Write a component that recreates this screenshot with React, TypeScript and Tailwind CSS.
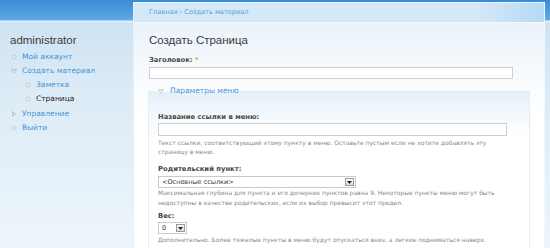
const MENU = [
  { label: 'Мой аккаунт', kind: 'leaf', depth: 0 },
  { label: 'Создать материал', kind: 'open', depth: 0 },
  { label: 'Заметка', kind: 'leaf', depth: 1 },
  { label: 'Страница', kind: 'leaf', depth: 1, active: true },
  { label: 'Управление', kind: 'closed', depth: 0 },
  { label: 'Выйти', kind: 'leaf', depth: 0 },
] as const

const Bullet = ({ kind }: { kind: 'leaf' | 'open' | 'closed' }) => {
  if (kind === 'open') {
    return (
      <svg width="6" height="6" viewBox="0 0 6 6" className="shrink-0">
        <path d="M0.5 1.5 L5.5 1.5 L3 5 Z" fill="#e4e4e4" stroke="#b8b8b8" strokeWidth="0.8" />
      </svg>
    )
  }
  if (kind === 'closed') {
    return (
      <svg width="6" height="6" viewBox="0 0 6 6" className="shrink-0">
        <path d="M1.5 0.5 L5 3 L1.5 5.5 Z" fill="#e4e4e4" stroke="#b8b8b8" strokeWidth="0.8" />
      </svg>
    )
  }
  return (
    <svg width="6" height="6" viewBox="0 0 6 6" className="shrink-0">
      <circle cx="3" cy="3" r="2" fill="#ececec" stroke="#c4c4c4" strokeWidth="0.8" />
    </svg>
  )
}

const SelectBox = ({ value, width }: { value: string; width: string }) => (
  <div className={`${width} h-[12px] border border-[#c9c9c9] bg-white flex items-center justify-between pl-[3px] pr-[1px]`}>
    <span className="text-[6.5px] leading-none text-[#333]">{value}</span>
    <div className="w-[9px] h-[8px] border border-[#9a9a9a] bg-[linear-gradient(to_bottom,#fafafa,#dcdcdc)] flex items-center justify-center">
      <svg width="5" height="3" viewBox="0 0 5 3">
        <path d="M0 0 L5 0 L2.5 3 Z" fill="#222" />
      </svg>
    </div>
  </div>
)

export default function App() {
  return (
    <div className="relative w-[550px] h-[248px] overflow-hidden flex font-['DejaVu_Sans',sans-serif] bg-[linear-gradient(to_bottom,#3a8ad5_0px,#5faae6_20px,#e8f2fa_21px,#cfe3f3_23px,#dcebf6_90px,#edf5fb_248px)]">
      {/* sidebar */}
      <div className="w-[133px] shrink-0 pl-[10px] pt-[33px]">
        <div className="font-['Liberation_Sans',sans-serif] text-[11.5px] leading-[14px] text-[#3c3c3c]">
          administrator
        </div>
        <ul className="mt-[3px] flex flex-col">
          {MENU.map((m) => (
            <li
              key={m.label}
              className={`h-[14px] flex items-center gap-[5px] ${m.depth ? 'pl-[15px]' : 'pl-[1px]'} ${m.label === 'Управление' ? 'mt-[1px]' : ''}`}
            >
              <Bullet kind={m.kind} />
              <span className={`text-[7.5px] leading-none ${'active' in m ? 'text-[#222]' : 'text-[#4592da]'}`}>
                {m.label}
              </span>
            </li>
          ))}
        </ul>
      </div>

      {/* main panel */}
      <div className="w-[412px] shrink-0 mt-[2px] flex flex-col border-l border-[#e6f0f8] border-r border-r-[#f2f7fc]">
        <div className="h-[20px] shrink-0 border-t border-[#eaf4fc] bg-[linear-gradient(to_right,#d3e8f8_0%,#d3e8f8_84%,#b5d9f4_100%)] pl-[15px] flex items-center">
          <span className="text-[6.6px] text-[#5b9dd8]">Главная › Создать материал</span>
        </div>
        <div className="flex-1 border-t border-[#f5f9fd] bg-[linear-gradient(to_bottom,#eaf2fa_0px,#f7fafd_50px,#ffffff_90px)] pl-[15px]">
          <h2 className="mt-[10px] font-['Liberation_Sans',sans-serif] text-[11.5px] leading-[14px] text-[#3a3a3a]">
            Создать Страница
          </h2>
          <div className="mt-[8px] text-[6.8px] leading-[10px] font-bold text-[#494949]">
            Заголовок: <span className="text-[#f5a623]">*</span>
          </div>
          <div className="mt-[2px] w-[364px] h-[12px] border border-[#cfcfcf] bg-white" />

          <fieldset className="mt-[7px] w-[382px] -ml-[1px] border-t border-x border-[#e2edf7] bg-[linear-gradient(to_bottom,#e6f0f9_0px,#f5f9fd_25px,#ffffff_45px)] pl-[9px] pb-[20px]">
            <legend className="-ml-[1px] px-[1px] flex items-center gap-[6px]">
              <svg width="6" height="5" viewBox="0 0 6 5">
                <path d="M0.5 0.5 L5.5 0.5 L3 4.5 Z" fill="#f0f0f0" stroke="#c4c4c4" strokeWidth="0.7" />
              </svg>
              <span className="text-[7.5px] leading-[10px] text-[#4592da]">Параметры меню</span>
            </legend>

            <div className="mt-[16px] text-[6.8px] leading-[10px] font-bold text-[#494949]">
              Название ссылки в меню:
            </div>
            <div className="mt-[1px] w-[349px] h-[13px] border border-[#cfcfcf] bg-white" />
            <div className="mt-[2px] text-[6px] leading-[9px] text-[#8a8a8a] w-[350px]">
              Текст ссылки, соответствующий этому пункту в меню. Оставьте пустым если не хотите добавлять эту страницу в меню.
            </div>

            <div className="mt-[8px] text-[6.8px] leading-[10px] font-bold text-[#494949]">
              Родительский пункт:
            </div>
            <div className="mt-[2px]">
              <SelectBox value="<Основные ссылки>" width="w-[198px]" />
            </div>
            <div className="text-[6px] leading-[9.5px] text-[#8a8a8a] w-[360px]">
              Максимальная глубина для пункта и его дочерних пунктов равна 9. Некоторые пункты меню могут быть недоступны в качестве родительских, если их выбор превысит этот предел.
            </div>

            <div className="mt-[4px] text-[6.8px] leading-[10px] font-bold text-[#494949]">
              Вес:
            </div>
            <div className="mt-[1px]">
              <SelectBox value="0" width="w-[29px]" />
            </div>
            <div className="mt-[1px] text-[6px] leading-[9px] text-[#8a8a8a] whitespace-nowrap">
              Дополнительно. Более тяжелые пункты в меню будут опускаться вниз, а легкие подниматься наверх.
            </div>
          </fieldset>
        </div>
      </div>
    </div>
  )
}
